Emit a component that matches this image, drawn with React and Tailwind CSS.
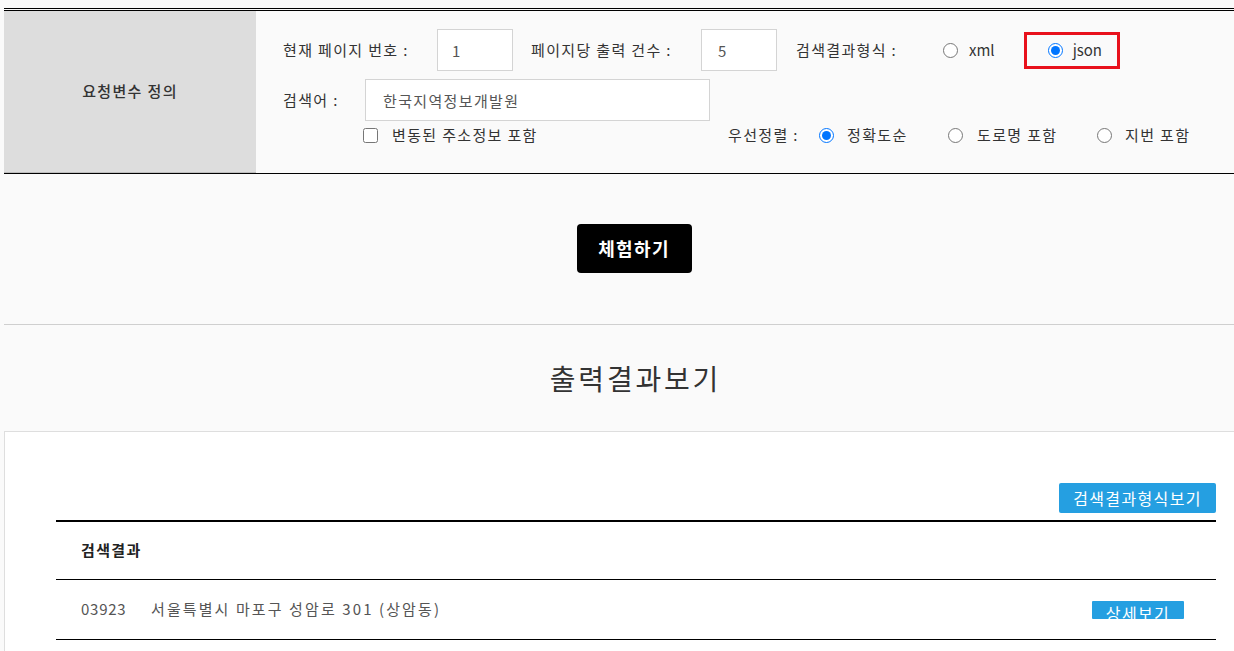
import React, { useState } from 'react';

const Radio = ({ name, checked, onChange }) => (
  <input
    type="radio"
    name={name}
    checked={checked}
    onChange={onChange}
    className="m-0 w-[15px] h-[15px] shrink-0 accent-[#0075ff]"
  />
);

const App = () => {
  const [format, setFormat] = useState('json');
  const [sort, setSort] = useState('accuracy');
  const [form, setForm] = useState({ page: '1', count: '5', keyword: '한국지역정보개발원' });

  const handleChange = (e) => {
    setForm({ ...form, [e.target.name]: e.target.value });
  };

  return (
    <div className="w-full h-[651px] overflow-hidden bg-[#fafafa] font-['Noto_Sans_CJK_KR',sans-serif] text-[15px] tracking-[0.09em] text-[#333]">
      <div className="w-[1268px] ml-[4px]">
        {/* 요청변수 테이블 */}
        <div className="mt-[8px] border-t border-black">
          <div className="mt-[1px] border-t border-[#c4c4c4] flex border-b border-black">
            <div className="w-[252px] bg-[#dddddd] border-b border-[#bdbdbd] flex items-center justify-center font-medium text-[#333]">
              요청변수 정의
            </div>
            <div className="flex-1 pl-[27px] pt-[18px] pb-[27px] flex flex-col">
              <div className="flex items-center h-[42px]">
                <span className="w-[154px]">현재 페이지 번호 :</span>
                <input
                  name="page"
                  value={form.page}
                  onChange={handleChange}
                  className="w-[76px] h-[42px] border border-[#d4d4d4] bg-white pl-[14px] text-[#555] outline-none"
                />
                <span className="ml-[18px] w-[170px]">페이지당 출력 건수 :</span>
                <input
                  name="count"
                  value={form.count}
                  onChange={handleChange}
                  className="w-[76px] h-[42px] border border-[#d4d4d4] bg-white pl-[16px] text-[#555] outline-none"
                />
                <span className="ml-[19px] w-[147px] whitespace-nowrap">검색결과형식 :</span>
                <label className="flex items-center gap-[11px] tracking-normal">
                  <Radio name="format" checked={format === 'xml'} onChange={() => setFormat('xml')} />
                  <span>xml</span>
                </label>
                <label className="ml-[29px] w-[96px] h-[37px] border-[3px] border-[#e8111c] flex items-center pl-[21px] gap-[10px] tracking-normal">
                  <Radio name="format" checked={format === 'json'} onChange={() => setFormat('json')} />
                  <span>json</span>
                </label>
              </div>
              <div className="flex items-center h-[42px] mt-[8px]">
                <span className="w-[82px]">검색어 :</span>
                <input
                  name="keyword"
                  value={form.keyword}
                  onChange={handleChange}
                  className="w-[345px] h-[42px] border border-[#d4d4d4] bg-white pl-[17px] text-[#555] outline-none"
                />
              </div>
              <div className="flex items-center h-[22px] mt-[3px]">
                <label className="ml-[80px] flex items-center gap-[14px] w-[365px]">
                  <input type="checkbox" className="m-0 w-[15px] h-[15px]" />
                  <span>변동된 주소정보 포함</span>
                </label>
                <span className="w-[91px] whitespace-nowrap">우선정렬 :</span>
                <label className="w-[129px] flex items-center gap-[13px]">
                  <Radio name="sort" checked={sort === 'accuracy'} onChange={() => setSort('accuracy')} />
                  <span>정확도순</span>
                </label>
                <label className="w-[149px] flex items-center gap-[14px]">
                  <Radio name="sort" checked={sort === 'road'} onChange={() => setSort('road')} />
                  <span>도로명 포함</span>
                </label>
                <label className="flex items-center gap-[13px]">
                  <Radio name="sort" checked={sort === 'jibun'} onChange={() => setSort('jibun')} />
                  <span>지번 포함</span>
                </label>
              </div>
            </div>
          </div>
        </div>

        {/* 체험하기 */}
        <div className="h-[151px] border-b border-[#cfcfcf] flex justify-center pt-[50px] pr-[8px]">
          <button
            type="button"
            className="w-[115px] h-[49px] bg-black text-white rounded-[4px] text-[18px] font-bold"
          >
            체험하기
          </button>
        </div>

        {/* 출력결과보기 */}
        <div className="h-[106px] flex items-center justify-center pr-[5px]">
          <h2 className="text-[28px] text-[#333] font-normal tracking-[0.1em]">출력결과보기</h2>
        </div>

        <div className="w-[1264px] bg-white border border-[#dedede] pt-[51px] px-[51px] h-[260px]">
          <div className="flex justify-end">
            <button
              type="button"
              className="w-[157px] h-[30px] bg-[#259fe1] text-white rounded-[2px] text-[16px]"
            >
              검색결과형식보기
            </button>
          </div>
          <div className="mt-[7px] border-t-2 border-black">
            <div className="h-[58px] border-b border-black flex items-center pl-[25px] font-bold text-[#222]">
              검색결과
            </div>
            <div className="h-[60px] border-b border-black flex items-center pl-[25px] pr-[32px] text-[#555]">
              <span className="w-[70px] tracking-[0.05em]">03923</span>
              <span className="flex-1 tracking-[0.14em]">서울특별시 마포구 성암로 301 (상암동)</span>
              <button
                type="button"
                className="w-[92px] h-[18px] overflow-hidden bg-[#259fe1] text-white text-[16px] leading-[24px] rounded-[1px]"
              >
                상세보기
              </button>
            </div>
          </div>
        </div>
      </div>
    </div>
  );
};

export default App;
